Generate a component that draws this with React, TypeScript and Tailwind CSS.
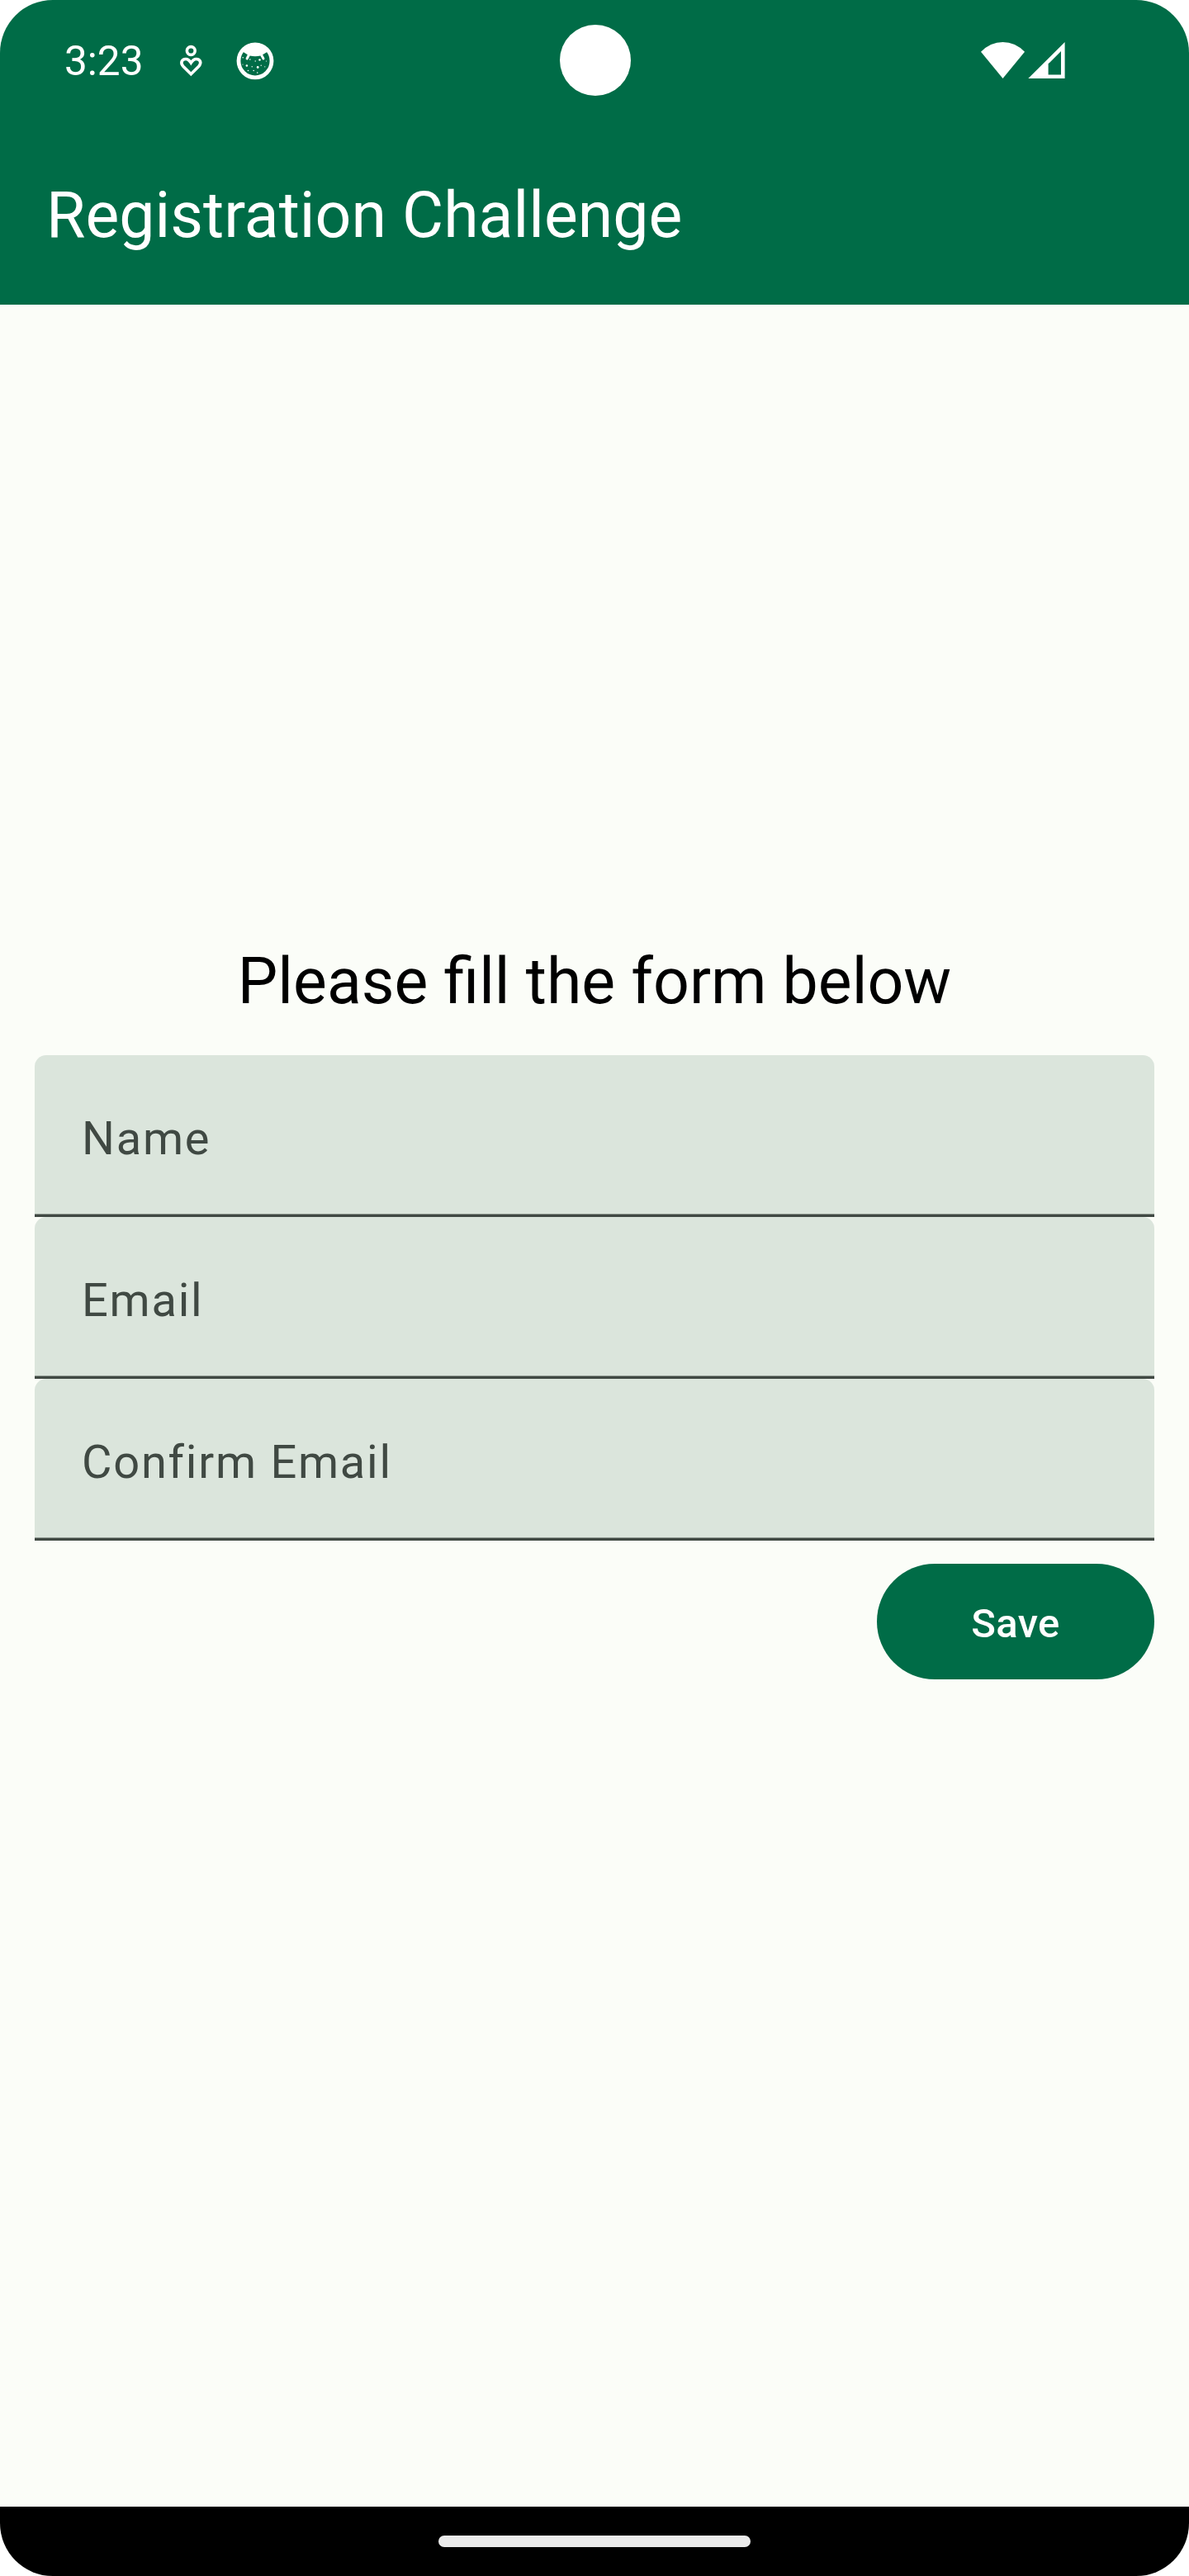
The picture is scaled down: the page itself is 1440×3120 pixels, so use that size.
const fields = ["Name", "Email", "Confirm Email"];

function HeartPersonIcon() {
  return (
    <svg className="ml-[43px] h-[40px] w-[30px]" viewBox="216 53.5 30 40" fill="none" stroke="white" strokeWidth="3.6">
      <circle cx="231.3" cy="61" r="4.9" />
      <path d="M231.3 89.3 L222 79.9 C217.8 75.4 220.4 71 225 71 C228 71 229.6 73 231.3 75.6 C233 73 234.6 71 237.7 71 C242.3 71 244.8 75.4 240.6 79.9 Z" />
    </svg>
  );
}

const dots = [
  [293.7, 69.3, 0.8], [302.3, 71.5, 0.8], [314, 72, 1.3], [308.7, 73.5, 0.7], [322, 73.5, 0.6],
  [293.5, 77.5, 0.6], [298.4, 79, 1.3], [304.7, 80.3, 0.7], [311.7, 81, 1.4], [315.7, 78.7, 0.7],
  [320.3, 80.3, 0.6], [300, 85, 0.8], [306.7, 85, 0.8], [311.2, 87.5, 0.8],
];

function CatIcon() {
  return (
    <svg className="ml-[39.5px] h-[46px] w-[46px]" viewBox="285.5 50.5 46 46">
      <circle cx="308.5" cy="73.3" r="20" fill="none" stroke="white" strokeWidth="4.8" />
      <path
        d="M290 66 C294 54 302 51.5 308.5 51.5 C315 51.5 323 54 327 66 L323.3 62.2 L317.6 65.8 L319.8 69.8 A1.4 1.4 0 0 1 317.2 71.2 L314.9 67 Q308.5 68.6 302.2 67 L300 71.2 A1.4 1.4 0 0 1 297.3 69.8 L299.3 65.8 L293.8 62.2 Z"
        fill="white"
      />
      {dots.map(([cx, cy, r]) => (
        <circle key={`${cx}-${cy}`} cx={cx} cy={cy} r={r} fill="white" />
      ))}
    </svg>
  );
}

function SignalIcons() {
  return (
    <svg className="ml-auto mr-[149px] h-[46px] w-[104px]" viewBox="1187 50.5 104 46" fill="white">
      <path d="M1188 62.2 Q1199.5 50.5 1214.5 50.5 Q1229.5 50.5 1241 62.2 L1214.5 94.5 Z" />
      <path fillRule="evenodd" d="M1245.3 94.6 L1289.6 50.5 V94.6 Z M1269.6 76.8 V90 H1285 V61.4 Z" />
    </svg>
  );
}

export default function App() {
  return (
    <div className="bg-white font-['Roboto',sans-serif]">
      <div className="relative flex h-[3120px] w-[1440px] flex-col overflow-hidden rounded-[64px] bg-[#fbfdf8]">
        <header className="flex h-[369px] shrink-0 flex-col bg-[#006c47] text-white">
          <div className="flex h-[147px] items-center pl-[78px]">
            <span className="w-[95px] pt-[3px] text-[49.5px] leading-none">3:23</span>
            <HeartPersonIcon />
            <CatIcon />
            <SignalIcons />
          </div>
          <h1 className="flex h-[222px] items-center pt-[6px] pl-[56px] text-[77px] leading-[98px]">Registration Challenge</h1>
        </header>
        <div className="absolute top-[29.5px] left-[677.5px] size-[86px] rounded-full bg-white" />

        <main className="flex flex-1 flex-col px-[42px] pt-[771px]">
          <h2 className="h-[138px] text-center text-[77px] leading-[98px] text-black">Please fill the form below</h2>
          {fields.map((name) => (
            <div key={name} className="flex h-[196px] flex-col overflow-hidden rounded-t-[14px] bg-[#dbe5dc]">
              <label className="flex flex-1 items-center pt-[10px] pl-[57px] text-[56px] leading-[84px] tracking-[1.75px] text-[#404943]">
                {name}
              </label>
              <div className="h-px bg-[#8d978f]" />
              <div className="h-[3px] bg-[#404943]" />
            </div>
          ))}
          <button className="mt-[28px] h-[140px] w-[336px] self-end rounded-full bg-[#006c47] pt-[5px] text-[49px] leading-[70px] font-medium tracking-[0.35px] text-white">
            Save
          </button>
        </main>

        <footer className="flex h-[84px] shrink-0 justify-center bg-black pt-[35px]">
          <div className="h-[14px] w-[378px] rounded-[7px] bg-[#ebebeb]" />
        </footer>
      </div>
    </div>
  );
}
